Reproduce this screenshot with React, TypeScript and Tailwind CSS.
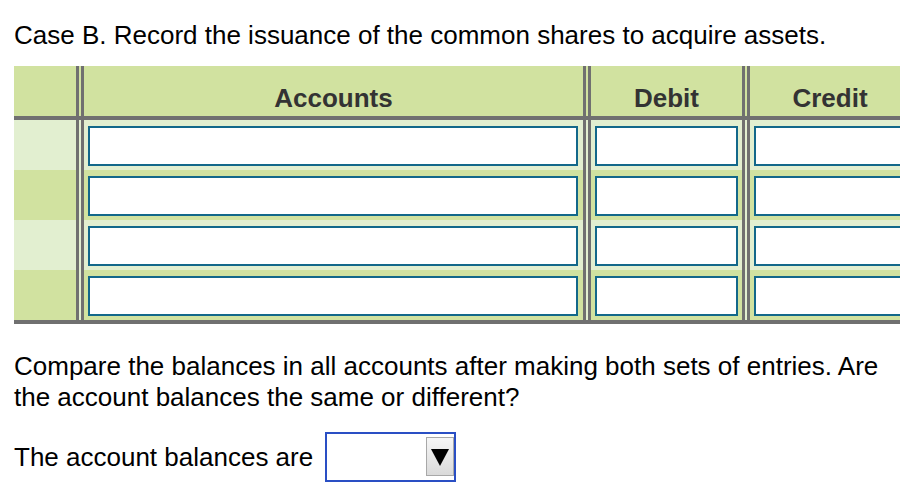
import React from "react";

const GRAY = "bg-[#707070]";

function Divider({ header }: { header?: boolean }) {
  return (
    <div className="flex w-[8px] flex-none">
      <div className={`w-[3px] ${GRAY}`} />
      <div className={`w-[2px] ${header ? "bg-[#d1e2a0]" : "bg-[#e2efd0]"}`} />
      <div className={`w-[3px] ${GRAY}`} />
    </div>
  );
}

function Input({ w }: { w: string }) {
  return <div className={`mt-[6px] ml-[4px] h-[40px] ${w} flex-none border-2 border-[#13688a] bg-white`} />;
}

function BodyRow({ light }: { light: boolean }) {
  const bg = light ? "bg-[#e2efd0]" : "bg-[#d1e2a0]";
  return (
    <div className={`flex h-[50px] ${bg}`}>
      <div className="w-[62px] flex-none" />
      <Divider />
      <div className="w-[499px] flex-none">
        <Input w="w-[490px]" />
      </div>
      <Divider />
      <div className="w-[151px] flex-none">
        <Input w="w-[143px]" />
      </div>
      <Divider />
      <div className="w-[160px] flex-none">
        <Input w="w-[152px]" />
      </div>
    </div>
  );
}

export default function App() {
  return (
    <div
      className="w-[900px] h-[500px] overflow-hidden bg-white text-black text-[26px] leading-[30px]"
      style={{ fontFamily: '"Liberation Sans", Arial, sans-serif' }}
    >
      <div className="pt-[20px] pl-[14px] whitespace-nowrap">
        Case B. Record the issuance of the common shares to acquire assets.
      </div>

      <div className="mt-[16px] ml-[14px] w-[896px]">
        <div className="flex h-[50px] bg-[#d1e2a0] font-bold text-[#333333]">
          <div className="w-[62px] flex-none" />
          <Divider header />
          <div className="w-[499px] flex-none pt-[17px] text-center">Accounts</div>
          <Divider header />
          <div className="w-[151px] flex-none pt-[17px] text-center">Debit</div>
          <Divider header />
          <div className="w-[160px] flex-none pt-[17px] text-center">Credit</div>
        </div>
        <div className={`h-[4px] ${GRAY}`} />
        <BodyRow light />
        <BodyRow light={false} />
        <BodyRow light />
        <BodyRow light={false} />
        <div className={`h-[4px] ${GRAY}`} />
      </div>

      <p className="mt-[27px] ml-[14px] w-[876px] leading-[31px]">
        Compare the balances in all accounts after making both sets of entries. Are the account balances the same or different?
      </p>

      <div className="mt-[19px] ml-[14px] flex items-start">
        <span className="mt-[10px] whitespace-nowrap">The account balances are</span>
        <div className="ml-[12px] w-[131px] h-[50px] flex-none border-2 border-[#2a4fc4] bg-white flex justify-end items-start">
          <div className="mt-[3px] w-[28px] h-[39px] border border-[#a8a8a8] bg-gradient-to-b from-[#f6f6f6] to-[#dadada] flex items-center justify-center">
            <svg width="18" height="18" viewBox="0 0 18 18">
              <polygon points="0,1 18,1 9,18" fill="#000" />
            </svg>
          </div>
        </div>
      </div>
    </div>
  );
}
